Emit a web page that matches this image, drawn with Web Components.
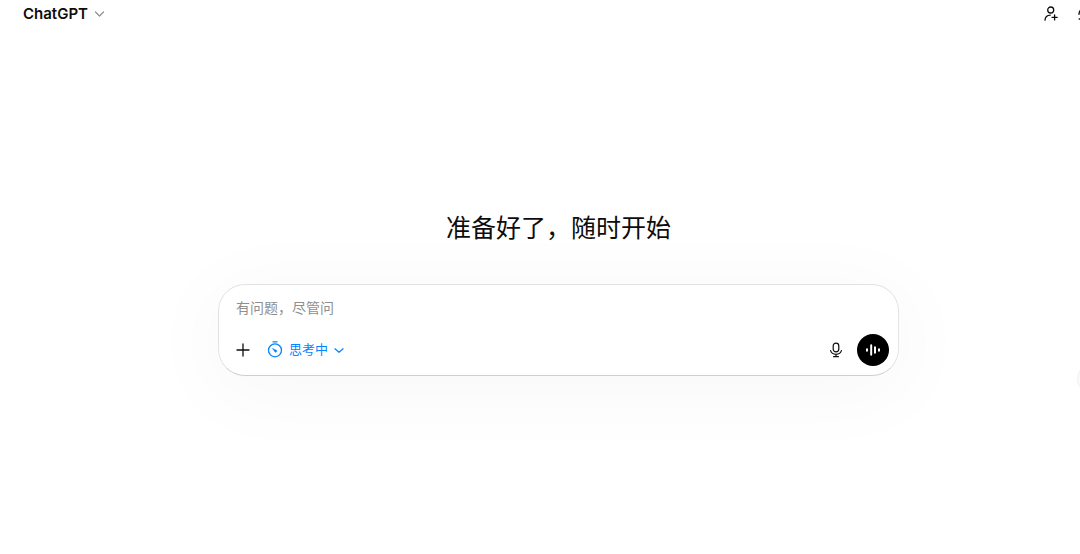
<!DOCTYPE html>
<html lang="zh-CN">
<head>
<meta charset="utf-8">
<meta name="viewport" content="width=device-width, initial-scale=1">
<title>ChatGPT</title>
<style>
  body { margin: 0; background: #fff; color: #0d0d0d; overflow: hidden; font-family: "Liberation Sans", "Noto Sans CJK SC", sans-serif; }
</style>
</head>
<body>
<chat-app></chat-app>
<script>
const define = (name, markup, setup) => {
  const template = document.createElement('template');
  template.innerHTML = '<style>*{box-sizing:border-box}button{font:inherit;color:inherit;background:none;border:0;padding:0;margin:0;cursor:pointer}svg{display:block;flex:none}</style>' + markup;
  customElements.define(name, class extends HTMLElement {
    constructor() {
      super();
      this.attachShadow({ mode: 'open' }).append(template.content.cloneNode(true));
      if (setup) setup(this);
    }
  });
};

define('icon-button', `
  <style>
    :host { display: block; flex: none; }
    button { display: flex; align-items: center; justify-content: center; width: 32px; height: 32px; border-radius: 16px; }
    :host([solid]) button { background: #000; color: #fff; }
  </style>
  <button type="button"><slot></slot></button>`,
  host => host.shadowRoot.querySelector('button').setAttribute('aria-label', host.getAttribute('label') || ''));

define('model-switcher', `
  <style>
    :host { display: block; }
    button { display: flex; align-items: center; gap: 6px; font: 600 15px/20px Inter, "Liberation Sans", sans-serif; }
    svg { color: #8f8f8f; }
  </style>
  <button type="button" aria-haspopup="menu">
    <span><slot></slot></span>
    <svg width="11" height="8" viewBox="0 0 11 8" fill="none" stroke="currentColor" stroke-width="1.2" stroke-linecap="round" stroke-linejoin="round"><path d="M1.500 2 5.500 6l4-4"/></svg>
  </button>`);

define('top-bar', `
  <style>
    :host { display: block; }
    header { display: flex; align-items: center; justify-content: space-between; height: 28px; padding-left: 23px; }
    nav { display: flex; flex: none; gap: 3px; margin-right: -22px; }
  </style>
  <header>
    <model-switcher>ChatGPT</model-switcher>
    <nav aria-label="对话操作">
      <icon-button label="添加成员">
        <svg width="16" height="18" viewBox="0 0 16 18" fill="none" stroke="currentColor" stroke-width="1.3" stroke-linecap="round"><circle cx="7.7" cy="5" r="3"/><path d="M2 15.2c.2-3 2-5 5.3-5.1M11.6 9.9v5M9.1 12.4h5"/></svg>
      </icon-button>
      <icon-button label="临时聊天">
        <svg width="18" height="18" viewBox="0 0 18 18" fill="none" stroke="currentColor" stroke-width="1.4" stroke-linecap="round"><path d="M2 9.300C2 7.800 2.400 6.500 3.300 5.300M6 2.700C9 1.200 12 2 14 4M16 8c.3 3-1 5-3 6.500M2.200 14h.5"/></svg>
      </icon-button>
    </nav>
  </header>`);

define('thinking-mode', `
  <style>
    :host { display: block; color: #0285ff; }
    button { display: flex; align-items: center; gap: 6px; height: 32px; font-size: 13px; line-height: 20px; }
  </style>
  <button type="button" aria-haspopup="menu">
    <svg width="16" height="18" viewBox="0 0 16 18" fill="none" stroke="currentColor" stroke-width="1.3" stroke-linecap="round"><circle cx="8" cy="9.300" r="6.5"/><path d="M6 .8h4"/><path d="M5.700 7.600 9 9a1.100 1.100 0 1 1-1.200 1.700Z" fill="currentColor" stroke-width=".5"/></svg>
    <span><slot></slot></span>
    <svg width="10" height="8" viewBox="0 0 10 8" fill="none" stroke="currentColor" stroke-width="1.2" stroke-linecap="round" stroke-linejoin="round"><path d="M1 2.700 5 6.300l4-3.600"/></svg>
  </button>`);

define('chat-composer', `
  <style>
    :host { display: block; width: 100%; max-width: 681px; }
    form { display: flex; flex-direction: column; gap: 15px; padding: 12px 9px 9px 8px; border: 1px solid #e3e3e3; border-bottom-color: #cfcfcf; border-radius: 27px; background: #fff; box-shadow: 0 12px 80px 8px rgba(0,0,0,.03); }
    input { display: block; width: 100%; height: 22px; margin: 0; padding: 0 9px; border: 0; outline: 0; background: none; color: inherit; font: inherit; font-size: 14px; line-height: 22px; }
    input::placeholder { color: #8f8f8f; opacity: 1; }
    .tools { display: flex; align-items: center; justify-content: space-between; }
    .group { display: flex; align-items: center; gap: 8px; }
    .end { gap: 5px; }
  </style>
  <form>
    <input type="text" aria-label="消息" placeholder="有问题，尽管问">
    <div class="tools">
      <div class="group">
        <icon-button label="添加">
          <svg width="14" height="14" viewBox="0 0 14 14" fill="none" stroke="currentColor" stroke-width="1.3" stroke-linecap="round"><path d="M7 1v12M1 7h12"/></svg>
        </icon-button>
        <thinking-mode>思考中</thinking-mode>
      </div>
      <div class="group end">
        <icon-button label="语音输入">
          <svg width="14" height="16" viewBox="0 0 14 16" fill="none" stroke="currentColor" stroke-width="1.2" stroke-linecap="round"><rect x="4.2" y="1.1" width="5.6" height="8.8" rx="2.8"/><path d="M1.600 8.600C2.300 11 4.500 12.300 7 12.300s4.700-1.300 5.400-3.700M7 12.300v2.400M4.600 14.700h4.800"/></svg>
        </icon-button>
        <icon-button label="语音模式" solid>
          <svg width="16" height="16" viewBox="0 0 16 16" fill="none" stroke="currentColor" stroke-width="2" stroke-linecap="round"><path d="M2 7.300v1.400M6.200 3.200v9.600M10 5.200v5.600M14 7.300v1.400"/></svg>
        </icon-button>
      </div>
    </div>
  </form>`);

define('chat-app', `
  <style>
    :host { display: flex; flex-direction: column; position: relative; min-height: 100vh; overflow: hidden; }
    main { display: flex; flex: 1; flex-direction: column; align-items: center; justify-content: center; gap: 36px; padding: 2px 0 0 37px; }
    h1 { margin: 0; font-size: 25px; line-height: 40px; font-weight: 400; }
    .scroll { position: absolute; right: -29px; top: calc(50% + 86px); }
    .scroll button { display: block; width: 32px; height: 32px; border: 1px solid #f0f0f0; border-radius: 16px; background: #fafafa; }
  </style>
  <top-bar></top-bar>
  <main>
    <h1>准备好了，随时开始</h1>
    <chat-composer></chat-composer>
  </main>
  <div class="scroll"><button type="button" aria-label="滚动到底部"></button></div>`);
</script>
</body>
</html>
